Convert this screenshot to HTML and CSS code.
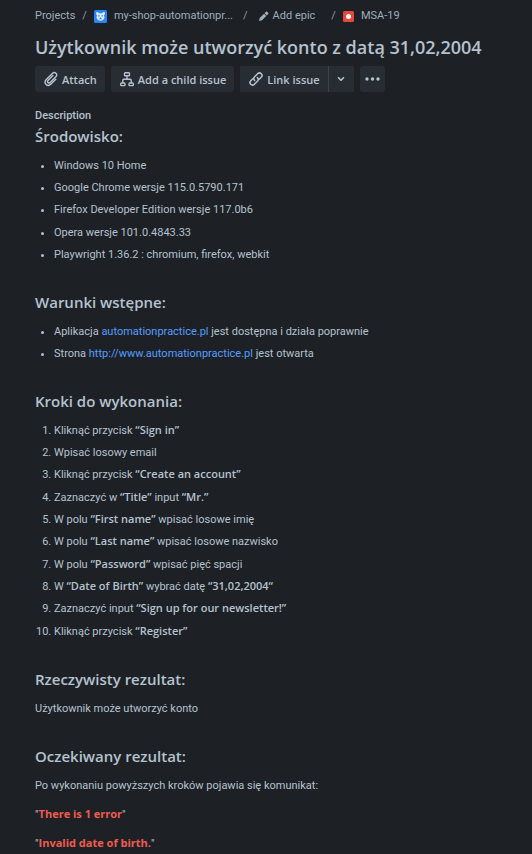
FILE: index.html
```html
<!DOCTYPE html>
<html lang="pl">
<head>
<meta charset="utf-8">
<meta name="viewport" content="width=device-width, initial-scale=1">
<title>MSA-19</title>
<link rel="stylesheet" href="styles.css">
</head>
<body>
<main class="issue">
  <nav class="crumbs" aria-label="Breadcrumbs">
    <a href="#">Projects</a>
    <span class="sep">/</span>
    <a href="#" class="crumb-project">
      <svg width="13" height="13" viewBox="0 0 13 13" aria-hidden="true"><rect width="13" height="13" rx="1.5" fill="#2684ff"/><path d="M2 3.200Q2 2 3.200 2T4.800 3.200h3.400Q8.600 2 9.800 2T11 3.200 10 5.200l.5 2.600Q9.500 10.800 6.500 10.800T2.500 7.800L3 5.200Q2 4.400 2 3.200z" fill="#deebff"/><path d="M4.200 5.200h1.300v1.300H4.200zM7.500 5.200h1.300v1.300H7.500zM5.200 8.400h.8v-.8h1v.8h.8v.8H5.200z" fill="#2675dd"/></svg>
      <span>my-shop-automationpr...</span>
    </a>
    <span class="sep">/</span>
    <a href="#" class="crumb-epic">
      <svg width="11" height="11" viewBox="0 0 11 11" aria-hidden="true"><path d="M1 10l.7-3L6 2.700 8.300 5 4 9.300zM6.500 2.200L8 .8q.6-.5 1.200 0l1 1q.5.600 0 1.200L8.800 4.500z" fill="#9fadbc"/></svg>
      <span>Add epic</span>
    </a>
    <span class="sep">/</span>
    <a href="#" class="crumb-key">
      <svg width="11" height="11" viewBox="0 0 11 11" aria-hidden="true"><rect width="11" height="11" rx="1.500" fill="#e5493a"/><circle cx="5.500" cy="5.500" r="2.500" fill="#fff"/></svg>
      <span>MSA-19</span>
    </a>
  </nav>

  <h1>Użytkownik może utworzyć konto z datą 31,02,2004</h1>

  <div class="actions">
    <button type="button" class="btn">
      <svg width="16" height="16" viewBox="0 0 16 16" fill="none" stroke="currentColor" stroke-width="1.400" stroke-linecap="round" aria-hidden="true"><path d="M12.800 8.300L8 13.100c-3.400 3.400-8-1-4.700-4.500l6-6.100c2.600-2.500 5.900.8 3.500 3.300l-5.700 5.700c-1.500 1.500-3.500-.5-2.100-2l4.900-4.900"/></svg>
      <span>Attach</span>
    </button>
    <button type="button" class="btn">
      <svg width="16" height="16" viewBox="0 0 16 16" fill="none" stroke="currentColor" stroke-width="1.400" aria-hidden="true"><rect x="5.500" y="1.700" width="5" height="3" rx=".8"/><rect x="1.700" y="12" width="4.300" height="2.600" rx=".8"/><rect x="10" y="12" width="4.300" height="2.600" rx=".8"/><path d="M8 4.700v3.500M3.800 12V9.200q0-1 1-1h6.400q1 0 1 1V12"/></svg>
      <span>Add a child issue</span>
    </button>
    <div class="split">
      <button type="button" class="btn btn-link">
        <svg width="16" height="16" viewBox="0 0 16 16" fill="none" stroke="currentColor" stroke-width="1.500" stroke-linecap="round" aria-hidden="true"><path d="M6.600 9.400c-1.200-1.200-1-2.600 0-3.600l3-3c2.500-2.400 6 1 3.600 3.500l-2 2"/><path d="M9.400 6.600c1.200 1.200 1 2.600 0 3.600l-3 3c-2.500 2.400-6-1-3.600-3.500l2-2"/></svg>
        <span>Link issue</span>
      </button>
      <button type="button" class="btn btn-caret" aria-label="More link options">
        <svg width="8" height="8" viewBox="0 0 8 8" fill="none" stroke="currentColor" stroke-width="1.600" stroke-linecap="round" stroke-linejoin="round" aria-hidden="true"><path d="M1.500 2.700L4 5.200l2.500-2.500"/></svg>
      </button>
    </div>
    <button type="button" class="btn btn-more" aria-label="More actions">
      <svg width="15" height="4" viewBox="0 0 15 4" fill="currentColor" aria-hidden="true"><circle cx="2" cy="2" r="1.700"/><circle cx="7.500" cy="2" r="1.700"/><circle cx="13" cy="2" r="1.700"/></svg>
    </button>
  </div>

  <h2 class="label">Description</h2>

  <section>
    <h3>Środowisko:</h3>
    <ul>
      <li>Windows 10 Home</li>
      <li>Google Chrome wersje 115.0.5790.171</li>
      <li>Firefox Developer Edition wersje 117.0b6</li>
      <li>Opera wersje 101.0.4843.33</li>
      <li>Playwright 1.36.2 : chromium, firefox, webkit</li>
    </ul>
  </section>

  <section>
    <h3>Warunki wstępne:</h3>
    <ul>
      <li>Aplikacja <a href="#">automationpractice.pl</a> jest dostępna i działa poprawnie</li>
      <li>Strona <a href="#">http://www.automationpractice.pl</a> jest otwarta</li>
    </ul>
  </section>

  <section>
    <h3>Kroki do wykonania:</h3>
    <ol>
      <li>Kliknąć przycisk <strong>“Sign in”</strong></li>
      <li>Wpisać losowy email</li>
      <li>Kliknąć przycisk <strong>“Create an account”</strong></li>
      <li>Zaznaczyć w <strong>“Title”</strong> input <strong>“Mr.”</strong></li>
      <li>W polu <strong>“First name”</strong> wpisać losowe imię</li>
      <li>W polu <strong>“Last name”</strong> wpisać losowe nazwisko</li>
      <li>W polu <strong>“Password”</strong> wpisać pięć spacji</li>
      <li>W <strong>“Date of Birth”</strong> wybrać datę <strong>“31,02,2004“</strong></li>
      <li>Zaznaczyć input <strong>“Sign up for our newsletter!”</strong></li>
      <li>Kliknąć przycisk <strong>“Register”</strong></li>
    </ol>
  </section>

  <section>
    <h3>Rzeczywisty rezultat:</h3>
    <p>Użytkownik może utworzyć konto</p>
  </section>

  <section>
    <h3>Oczekiwany rezultat:</h3>
    <p>Po wykonaniu powyższych kroków pojawia się komunikat:</p>
    <p>"<strong class="error">There is 1 error</strong>"</p>
    <p>"<strong class="error">Invalid date of birth.</strong>"</p>
  </section>
</main>
</body>
</html>
```
FILE: styles.css
```css
* { box-sizing: border-box; }

body {
  margin: 0;
  background: #1d2125;
  color: #b6c2cf;
  font: 11px/19px Roboto, "Open Sans", sans-serif;
}

.issue { padding: 6px 35px 0; }

h1, h2, h3, p, ul, ol { margin: 0; }

a { color: #579dff; text-decoration: none; }

.crumbs {
  display: flex;
  align-items: center;
  line-height: 20px;
  white-space: nowrap;
}
.crumbs a {
  display: flex;
  align-items: center;
  gap: 7px;
  color: #9fadbc;
}
.crumbs .sep { margin: 0 7px; color: #8c9bab; }
.crumbs .crumb-project { margin-right: 3px; }
.crumbs .crumb-epic { gap: 4px; margin: 0 9px 0 3px; }

h1 {
  margin-top: 9px;
  font: 600 18px/24px "Open Sans", "Noto Sans", sans-serif;
}

.actions {
  display: flex;
  flex-wrap: wrap;
  gap: 6px;
  margin-top: 7px;
}
.btn {
  display: flex;
  align-items: center;
  justify-content: center;
  gap: 3px;
  height: 26px;
  padding: 0 8px;
  border: 0;
  border-radius: 3px;
  background: #282d33;
  color: #b6c2cf;
  font: 600 11px/19px "Open Sans", "Noto Sans", sans-serif;
  white-space: nowrap;
}
.split { display: flex; gap: 1px; border-radius: 3px; background: #3b444c; }
.btn-link { border-radius: 3px 0 0 3px; }
.btn-caret { width: 25px; padding: 0; border-radius: 0 3px 3px 0; }
.btn-more { width: 25px; padding: 0; }

.label {
  margin-top: 15px;
  font-size: 11px;
  line-height: 18px;
  font-weight: 500;
}

h3 { font: 600 15px/22px "Open Sans", "Noto Sans", sans-serif; }
section + section { margin-top: 27px; }

ul, ol { margin-top: 9px; padding-left: 19px; }
li + li { margin-top: 3px; }
li:nth-child(3n + 4) { margin-top: 4px; }
p { margin-top: 9px; }
p + p { margin-top: 10px; }

strong { font-family: "Open Sans", "Noto Sans", sans-serif; font-weight: 600; line-height: 1; }
.error { color: #f15b50; font-weight: 700; }
```
